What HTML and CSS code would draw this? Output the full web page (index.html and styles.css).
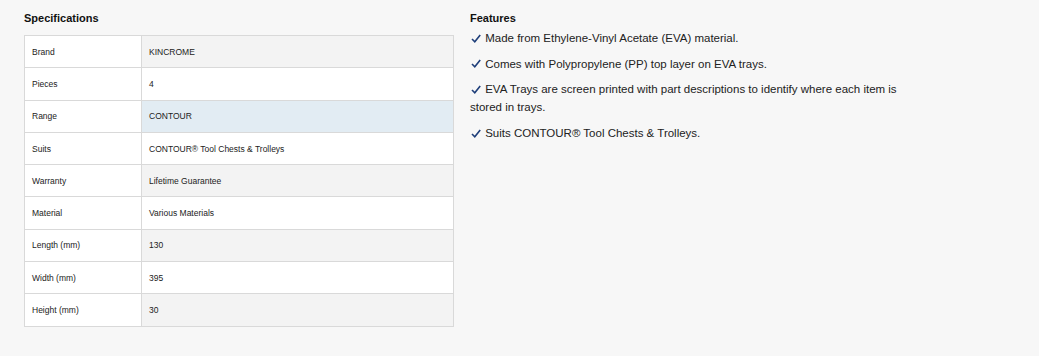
FILE: index.html
```html
<!DOCTYPE html>
<html>
<head>
<meta charset="utf-8">
<link rel="stylesheet" href="styles.css">
</head>
<body>
<div class="wrap">
  <section class="specs">
    <h3 class="heading">Specifications</h3>
    <table class="spec-table">
      <tr class="alt"><td>Brand</td><td>KINCROME</td></tr>
      <tr><td>Pieces</td><td>4</td></tr>
      <tr class="hl"><td>Range</td><td>CONTOUR</td></tr>
      <tr><td>Suits</td><td>CONTOUR® Tool Chests &amp; Trolleys</td></tr>
      <tr class="alt"><td>Warranty</td><td>Lifetime Guarantee</td></tr>
      <tr><td>Material</td><td>Various Materials</td></tr>
      <tr class="alt"><td>Length (mm)</td><td>130</td></tr>
      <tr><td>Width (mm)</td><td>395</td></tr>
      <tr class="alt"><td>Height (mm)</td><td>30</td></tr>
    </table>
  </section>
  <section class="features">
    <h3 class="heading">Features</h3>
    <p><svg class="tick" viewBox="0 0 10 9" width="10" height="9"><path d="M1 5 L3.8 7.8 L9.2 1"/></svg> Made from Ethylene-Vinyl Acetate (EVA) material.</p>
    <p><svg class="tick" viewBox="0 0 10 9" width="10" height="9"><path d="M1 5 L3.8 7.8 L9.2 1"/></svg> Comes with Polypropylene (PP) top layer on EVA trays.</p>
    <p><svg class="tick" viewBox="0 0 10 9" width="10" height="9"><path d="M1 5 L3.8 7.8 L9.2 1"/></svg> EVA Trays are screen printed with part descriptions to identify where each item is stored in trays.</p>
    <p><svg class="tick" viewBox="0 0 10 9" width="10" height="9"><path d="M1 5 L3.8 7.8 L9.2 1"/></svg> Suits CONTOUR® Tool Chests &amp; Trolleys.</p>
  </section>
</div>
</body>
</html>
```

FILE: styles.css
```css
html, body {
  margin: 0;
  padding: 0;
  background: #f7f7f7;
  font-family: "Liberation Sans", Arial, sans-serif;
  color: #1a1a1a;
}
.wrap {
  display: flex;
  gap: 16px;
  padding: 11px 0 0 24px;
}
.specs {
  width: 430px;
  flex: none;
}
.heading {
  margin: 0;
  font-size: 11px;
  font-weight: bold;
  line-height: 14px;
  color: #111;
}
.specs .heading {
  margin-bottom: 10px;
}
.spec-table {
  width: 430px;
  border-collapse: collapse;
  font-size: 8.5px;
  background: #fff;
}
.spec-table td {
  border: 1px solid #d9d9d9;
  height: 31.3px;
  padding: 0 0 0 7px;
  vertical-align: middle;
  color: #222;
}
.spec-table td:first-child {
  width: 109px;
  background: #fff;
}
.spec-table tr.alt td:last-child {
  background: #f3f3f3;
}
.spec-table tr.hl td:last-child {
  background: #e2ecf3;
}
.features {
  width: 432px;
  flex: none;
}
.features .heading {
  margin-bottom: 4px;
}
.features p {
  margin: 0 0 7.7px 0;
  font-size: 11.5px;
  line-height: 18px;
  color: #222;
}
.tick {
  display: inline-block;
  vertical-align: -0.5px;
  margin-left: 1px;
  margin-right: 1px;
  fill: none;
  stroke: #1f3f7a;
  stroke-width: 1.6;
}
```
